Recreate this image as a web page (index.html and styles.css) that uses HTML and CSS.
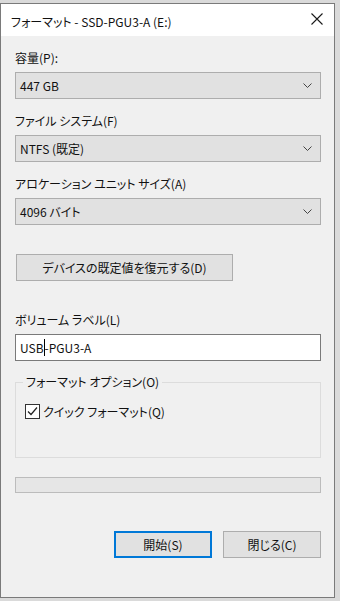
FILE: index.html
```html
<!DOCTYPE html>
<html lang="ja">
<head>
    <meta charset="UTF-8">
    <meta name="viewport" content="width=device-width, initial-scale=1.0">
    <title>フォーマット</title>
    <link rel="stylesheet" href="styles.css">
</head>
<body>
    <div class="window">
        <div class="titlebar">
            <span class="title">フォーマット - SSD-PGU3-A (E:)</span>
            <svg class="close" width="12" height="12" viewBox="0 0 12 12">
                <path d="M0.5 0.5 L11.5 11.5 M11.5 0.5 L0.5 11.5" stroke="#1a1a1a" stroke-width="1.1" fill="none"/>
            </svg>
        </div>
        <div class="content">
            <div class="label">容量(P):</div>
            <div class="select">
                <span>447 GB</span>
                <svg class="chevron" width="9" height="5" viewBox="0 0 9 5"><path d="M0.5 0.5 L4.5 4.5 L8.5 0.5" stroke="#444" fill="none"/></svg>
            </div>

            <div class="label">ファイル システム(F)</div>
            <div class="select">
                <span>NTFS (既定)</span>
                <svg class="chevron" width="9" height="5" viewBox="0 0 9 5"><path d="M0.5 0.5 L4.5 4.5 L8.5 0.5" stroke="#444" fill="none"/></svg>
            </div>

            <div class="label">アロケーション ユニット サイズ(A)</div>
            <div class="select">
                <span>4096 バイト</span>
                <svg class="chevron" width="9" height="5" viewBox="0 0 9 5"><path d="M0.5 0.5 L4.5 4.5 L8.5 0.5" stroke="#444" fill="none"/></svg>
            </div>

            <button class="btn restore">デバイスの既定値を復元する(D)</button>

            <div class="label volume">ボリューム ラベル(L)</div>
            <div class="textbox">USB<span class="caret"></span>-PGU3-A</div>

            <fieldset class="group">
                <legend>フォーマット オプション(O)</legend>
                <label class="check">
                    <span class="box">
                        <svg width="11" height="11" viewBox="0 0 11 11"><path d="M1 5.5 L4 8.5 L10 1.5" stroke="#222" stroke-width="1.2" fill="none"/></svg>
                    </span>
                    クイック フォーマット(Q)
                </label>
            </fieldset>

            <div class="progress"></div>

            <div class="actions">
                <button class="btn primary">開始(S)</button>
                <button class="btn">閉じる(C)</button>
            </div>
        </div>
    </div>
</body>
</html>
```

FILE: styles.css
```css
body {
    margin: 0;
    padding-top: 3px;
    background-color: #dadada;
    font-family: "Noto Sans CJK JP", "Noto Sans", sans-serif;
    font-size: 12px;
    font-feature-settings: "palt";
    color: #111;
}
.window {
    width: 333px;
    height: 593px;
    border: 1px solid #7a7a7a;
    background: #f0f0f0;
    display: flex;
    flex-direction: column;
}
.titlebar {
    height: 32px;
    background: #fff;
    display: flex;
    align-items: center;
    justify-content: space-between;
    padding: 0 10px 0 10px;
}
.title {
    margin-top: 2px;
}
.close {
    margin-top: -2px;
    margin-right: 1px;
}
.content {
    padding: 0 13px 0 14px;
    display: flex;
    flex-direction: column;
}
.label {
    line-height: 16px;
    margin: 14px 0 6px;
}
.select {
    height: 25px;
    border: 1px solid #adadad;
    background: #e1e1e1;
    display: flex;
    align-items: center;
    justify-content: space-between;
    padding: 0 8px 0 4px;
}
.btn {
    font-family: inherit;
    font-size: 12px;
    font-feature-settings: "palt";
    color: #111;
    background: #e1e1e1;
    border: 1px solid #adadad;
    height: 27px;
    padding: 0;
}
.restore {
    width: 217px;
    margin: 29px 0 0 1px;
}
.volume {
    margin-top: 31px;
}
.textbox {
    height: 25px;
    border: 1px solid #7a7a7a;
    background: #fff;
    display: flex;
    align-items: center;
    padding: 0 4px;
}
.caret {
    display: inline-block;
    width: 1px;
    height: 17px;
    background: #000;
}
.group {
    margin: 13px 0 0;
    padding: 13px 9px 0;
    border: 1px solid #dcdcdc;
    height: 69px;
}
.group legend {
    padding: 0 3px;
    margin-left: -2px;
    line-height: 16px;
}
.check {
    display: flex;
    align-items: center;
    gap: 3px;
}
.box {
    width: 13px;
    height: 13px;
    border: 1px solid #333;
    background: #fff;
    display: flex;
    align-items: center;
    justify-content: center;
}
.progress {
    height: 14px;
    margin-top: 19px;
    border: 1px solid #bcbcbc;
    background: #e6e6e6;
}
.actions {
    display: flex;
    justify-content: flex-end;
    gap: 11px;
    margin-top: 38px;
}
.actions .btn {
    width: 98px;
}
.actions .primary {
    width: 98px;
    border: 2px solid #0078d7;
}
```
